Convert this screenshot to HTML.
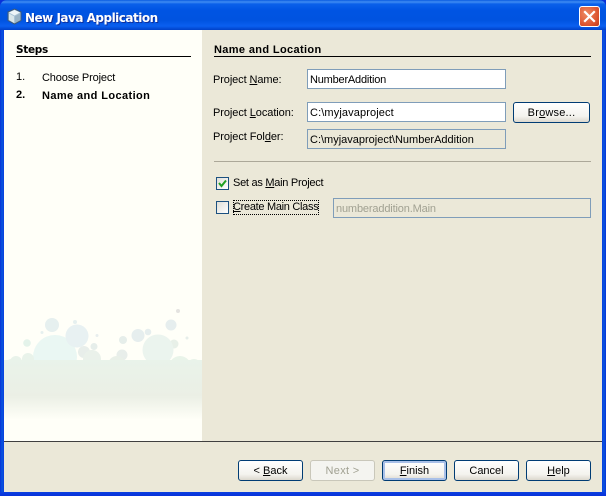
<!DOCTYPE html>
<html><head><meta charset="utf-8"><style>
html,body{margin:0;padding:0;width:606px;height:496px;overflow:hidden;background:#0831d9}
*{box-sizing:border-box}
body{position:relative;font:11px "Liberation Sans",sans-serif;color:#000}
.a{position:absolute}
.t{position:absolute;white-space:nowrap;line-height:13px}
u{text-decoration:underline}
.in{position:absolute;height:20px;border:1px solid #7f9db9;background:#fff;padding:1px 0 0 2px;line-height:18px;white-space:nowrap;overflow:hidden}
.ro{background:#ebe8d8}
.btn{position:absolute;height:21px;border:1px solid #003c74;border-radius:3px;background:linear-gradient(#fff,#f4f3ee 70%,#dcd8ce);text-align:center;line-height:20px;white-space:nowrap}
.dis{border-color:#c9c7ba;color:#a1a192;background:#f4f4f0}
.def{box-shadow:inset 0 0 0 2px #a9c0e8}
.cb{position:absolute;width:13px;height:13px;border:1px solid #1c5180;background:linear-gradient(135deg,#e0dfd8,#fff)}
</style></head><body>
<div class="a" style="left:0;top:0;width:606px;height:30px;border-radius:7px 7px 0 0;background:linear-gradient(#0a5be0 0,#3f8cf3 2px,#0a60ea 4px,#0054e3 10px,#0053e0 20px,#0a5ff0 26px,#0041c8 30px)"></div>
<div class="a" style="left:0;top:30px;width:4px;height:466px;background:linear-gradient(90deg,#0831d9,#0855dd 2px,#0a3fe0)"></div>
<div class="a" style="right:0;top:30px;width:4px;height:466px;background:linear-gradient(90deg,#0a3fe0,#0855dd 2px,#0831d9)"></div>
<div class="a" style="left:0;top:492px;width:606px;height:4px;background:linear-gradient(#0a3fe0,#0831d9)"></div>
<div class="a" style="left:4px;top:30px;width:598px;height:462px;background:#ebe8d8"></div>
<svg class="a" style="left:6px;top:8px" width="17" height="17" viewBox="0 0 17 17"><path d="M8.5 1L15 4v8.5L8.5 16 2 12.500V4z" fill="#a9c3d6" stroke="#3d5a7a" stroke-width="1"/><path d="M8.500 2L14 4.500 8.500 7.500 3 4.500z" fill="#eef5f8"/><path d="M3 5.500l5 2.700V15L3 12z" fill="#d9e6ea"/><path d="M9 8.200l5-2.700V12l-5 3z" fill="#9ab3c4"/></svg>
<div class="t" style="left:25px;top:11px;font:bold 12px/15px 'DejaVu Sans',sans-serif;letter-spacing:-.5px;color:#fff;text-shadow:1px 1px 0 #0f2f9c">New Java Application</div>
<div class="a" style="left:579px;top:6px;width:21px;height:21px;border:1px solid #fff;border-radius:3px;background:radial-gradient(circle at 35% 35%,#ee8a62,#dc5430 65%,#c13a18)"></div>
<svg class="a" style="left:579px;top:6px" width="21" height="21"><path d="M6 6l9 9M15 6l-9 9" stroke="#fff" stroke-width="2.200" stroke-linecap="square"/></svg>

<div class="a" style="left:4px;top:30px;width:198px;height:411px;background:#fffff8"></div>
<svg class="a" style="left:4px;top:300px" width="198" height="141" viewBox="4 300 198 141">
<defs><linearGradient id="g" x1="0" y1="0" x2="0" y2="1"><stop offset="0" stop-color="#e9f3ea"/><stop offset=".6" stop-color="#ebefe5"/><stop offset="1" stop-color="#fffff8"/></linearGradient></defs>
<g>
<circle cx="52" cy="325" r="7" fill="#e6f0ef"/><circle cx="75" cy="322" r="2" fill="#e6f0ef"/><circle cx="42" cy="332.500" r="1.500" fill="#e6f0ef"/>
<circle cx="27" cy="343" r="3.800" fill="#e4f3ea"/><circle cx="55" cy="357" r="22" fill="#eaf7f3"/><circle cx="77" cy="336" r="11.500" fill="#e8f1f2"/><circle cx="97" cy="335.500" r="1.500" fill="#e8eeee"/><circle cx="94" cy="346.500" r="3.500" fill="#e6eeea"/><circle cx="84" cy="352" r="6" fill="#e8eeea"/><circle cx="92" cy="359" r="9" fill="#eaf1ea"/>
<circle cx="123" cy="340" r="4" fill="#e6eeea"/><circle cx="138" cy="335.500" r="6.500" fill="#e6eeee"/><circle cx="148" cy="332" r="3.300" fill="#e6eeee"/><circle cx="122" cy="355" r="5.500" fill="#e8eeea"/><circle cx="117" cy="365" r="9" fill="#e9f0e8"/>
<circle cx="171" cy="325" r="5.500" fill="#e6eeee"/><circle cx="178" cy="311" r="2" fill="#e4e3e0"/><circle cx="187" cy="338" r="1.500" fill="#e6eeea"/><circle cx="174" cy="344" r="4.500" fill="#e8f0e8"/><circle cx="158" cy="350" r="15.500" fill="#ebf4ee"/>
<circle cx="16" cy="362" r="6" fill="#e9f3ea"/><circle cx="28" cy="359" r="6" fill="#e9f3ea"/><circle cx="11" cy="364" r="5" fill="#e9f3ea"/><circle cx="180" cy="367" r="11" fill="#e9f4e9"/><circle cx="194" cy="366" r="7" fill="#e9f4e9"/>
</g>
<rect x="4" y="360" width="198" height="60" fill="url(#g)"/>
</svg>
<div class="t" style="left:16px;top:44px;font-weight:bold;font-family:'DejaVu Sans',sans-serif;font-size:10.500px;letter-spacing:-.3px">Steps</div>
<div class="a" style="left:16px;top:56px;width:175px;height:1px;background:#000"></div>
<div class="t" style="left:16px;top:71px">1.</div><div class="t" style="left:42px;top:72px;letter-spacing:-.15px">Choose Project</div>
<div class="t" style="left:16px;top:89px;font-weight:bold">2.</div><div class="t" style="left:42px;top:90px;font-weight:bold;letter-spacing:.4px">Name and Location</div>

<div class="t" style="left:214px;top:44px;font-weight:bold;letter-spacing:.36px">Name and Location</div>
<div class="a" style="left:214px;top:56px;width:377px;height:1px;background:#000"></div>
<div class="t" style="left:213px;top:74px;letter-spacing:-.1px">Project <u>N</u>ame:</div>
<div class="in" style="left:307px;top:69px;width:199px;letter-spacing:-.2px">NumberAddition</div>
<div class="t" style="left:213px;top:107px;letter-spacing:-.07px">Project <u>L</u>ocation:</div>
<div class="in" style="left:307px;top:102px;width:199px;letter-spacing:.12px">C:\myjavaproject</div>
<div class="btn" style="left:513px;top:102px;width:77px;letter-spacing:.2px">Br<u>o</u>wse...</div>
<div class="t" style="left:213px;top:131px;letter-spacing:-.07px">Project Fol<u>d</u>er:</div>
<div class="in ro" style="left:307px;top:129px;width:199px">C:\myjavaproject\NumberAddition</div>
<div class="a" style="left:214px;top:161px;width:377px;height:1px;background:#aca899"></div>
<div class="cb" style="left:216px;top:177px"></div>
<svg class="a" style="left:216px;top:177px" width="13" height="13"><path d="M3 6l2.500 3L10 3.500" fill="none" stroke="#21a121" stroke-width="2"/></svg>
<div class="t" style="left:233px;top:177px;letter-spacing:-.27px">Set as <u>M</u>ain Project</div>
<div class="cb" style="left:216px;top:201px"></div>
<div class="a" style="left:233px;top:200px;width:86px;height:15px;border:1px dotted #000"></div>
<div class="t" style="left:233px;top:201px;letter-spacing:-.3px"><u>C</u>reate Main Class</div>
<div class="in ro" style="left:333px;top:198px;width:258px;color:#a1a192;letter-spacing:-.15px">numberaddition.Main</div>

<div class="a" style="left:4px;top:441px;width:598px;height:1px;background:#404040"></div>
<div class="btn" style="left:238px;top:460px;width:65px">&lt; <u>B</u>ack</div>
<div class="btn dis" style="left:310px;top:460px;width:65px;letter-spacing:.3px">Next &gt;</div>
<div class="btn def" style="left:382px;top:460px;width:65px"><u>F</u>inish</div>
<div class="btn" style="left:454px;top:460px;width:65px">Cancel</div>
<div class="btn" style="left:526px;top:460px;width:65px"><u>H</u>elp</div>
</body></html>
